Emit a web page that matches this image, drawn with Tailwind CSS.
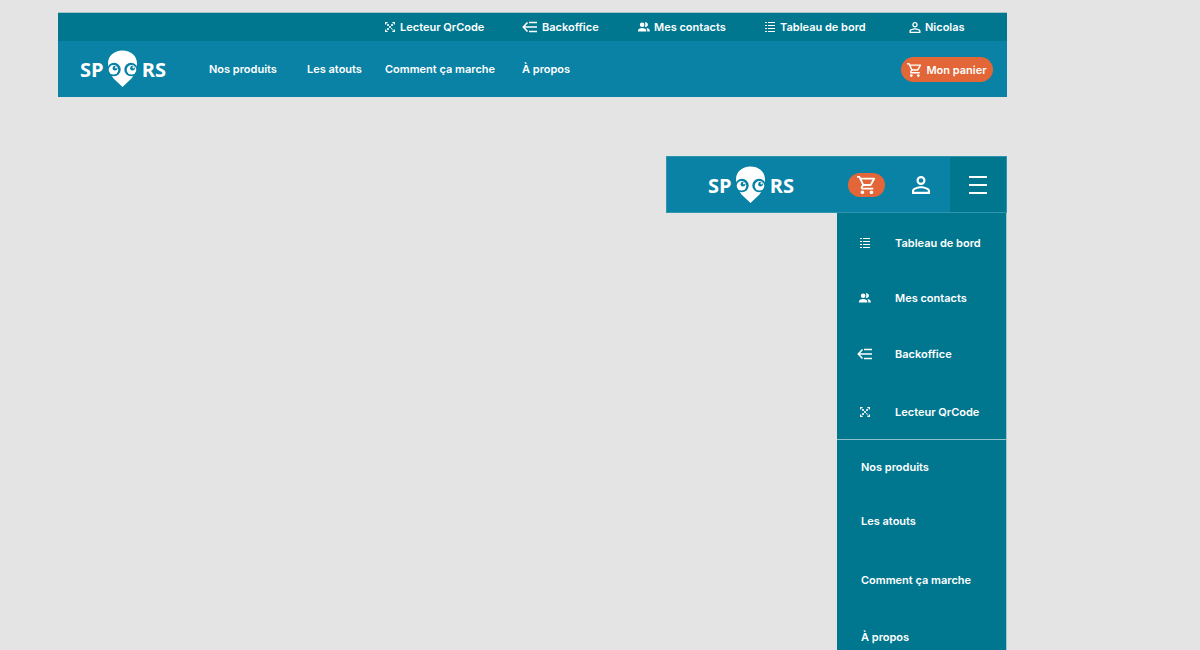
<!DOCTYPE html>
<html lang="fr">
<head>
<meta charset="utf-8">
<meta name="viewport" content="width=device-width, initial-scale=1">
<title>Spoors</title>
<script src="https://cdn.jsdelivr.net/npm/@tailwindcss/browser@4"></script>
</head>
<body class="h-screen overflow-hidden bg-[#e4e4e4] pt-3 pr-[193px] pl-[58px] font-['Inter',sans-serif] text-[11px] leading-4 font-semibold text-white">
<svg class="hidden" aria-hidden="true">
  <symbol id="logo" viewBox="0 0 86 38">
    <g fill="#fff" font-family="Open Sans, sans-serif" font-weight="700" font-size="20">
      <text x="0" y="27">SP</text>
      <text x="86" y="27" text-anchor="end">RS</text>
    </g>
    <path fill="#fff" d="M42.500.5C34 .5 28 6 28 13.500c0 2 .5 4 1.500 6 1.500 4 2 6.500 4 9l9 8.500 9-8.500c2-2.500 2.500-5 4-9 1-2 1.500-4 1.500-6C57 6 51 .5 42.500.5z"/>
    <circle cx="34" cy="19.500" r="6.700" fill="#0982a5"/>
    <circle cx="51" cy="19.500" r="6.700" fill="#0982a5"/>
    <circle cx="33.500" cy="19.800" r="4.800" fill="#fff"/>
    <circle cx="51.500" cy="19.800" r="4.800" fill="#fff"/>
    <circle cx="35" cy="18.200" r="2.400" fill="#0982a5"/>
    <circle cx="52.500" cy="18.200" r="2.400" fill="#0982a5"/>
    <circle cx="36" cy="17.300" r="1.100" fill="#fff"/>
    <circle cx="53.500" cy="17.300" r="1.100" fill="#fff"/>
  </symbol>
  <symbol id="qr" viewBox="0 0 12 12">
    <path d="M1.600 3.600V1.600h2M8.400 1.600h2v2M10.400 8.400v2h-2M3.600 10.400h-2v-2" fill="none" stroke="#fff" stroke-width="1.200"/>
    <path d="M3 3h2v2H3zM7 3h2v2H7zM3 7h2v2H3zM5 5h2v2H5zM7 7h1.200v1.200H7zM8.200 8.200h1v1h-1z" fill="#fff" opacity=".8"/>
  </symbol>
  <symbol id="back" viewBox="0 0 16 12">
    <path d="M7 1.500h8M1 6h14M7 10.500h8M5.500 1.500 1.300 6l4.200 4.500" fill="none" stroke="#fff" stroke-width="1.600"/>
  </symbol>
  <symbol id="people" viewBox="0 0 13 12">
    <circle cx="4.500" cy="3.500" r="2.500" fill="#fff"/>
    <path fill="#fff" d="M0 11V9.500C0 7.700 3 7 4.500 7S9 7.700 9 9.500V11zM7.300 1.200a2.500 2.500 0 1 1 0 4.600c.9-1.400.9-3.200 0-4.600zM9 7.100c2 .3 3.700 1.100 3.700 2.500V11H10V9.500c0-1-.4-1.800-1-2.400z"/>
  </symbol>
  <symbol id="list" viewBox="0 0 12 12">
    <path d="M1 1.500h2M4 1.500h7M1 4.500h2M4 4.500h7M1 7.500h2M4 7.500h7M1 10.500h2M4 10.500h7" fill="none" stroke="#fff" stroke-width="1.200"/>
  </symbol>
  <symbol id="person" viewBox="4 4 16 16">
    <path fill="#fff" d="M12 5.900a2.100 2.100 0 1 1 0 4.200 2.100 2.100 0 0 1 0-4.200m0 9c2.970 0 6.100 1.460 6.100 2.100v1.100H5.900V17c0-.64 3.130-2.100 6.100-2.100M12 4C9.790 4 8 5.790 8 8s1.790 4 4 4 4-1.790 4-4-1.790-4-4-4m0 9c-2.670 0-8 1.340-8 4v3h16v-3c0-2.660-5.330-4-8-4"/>
  </symbol>
  <symbol id="cart" viewBox="1 2 21 20">
    <path fill="#fff" d="M15.550 13c.75 0 1.410-.41 1.750-1.030l3.580-6.490A.996.996 0 0 0 20.010 4H5.210l-.94-2H1v2h2l3.600 7.590-1.350 2.440C4.520 15.370 5.480 17 7 17h12v-2H7l1.100-2zM6.160 6h12.150l-2.760 5H8.530zM7 18c-1.100 0-1.990.9-1.990 2S5.900 22 7 22s2-.9 2-2-.9-2-2-2m10 0c-1.100 0-1.990.9-1.990 2s.89 2 1.990 2 2-.9 2-2-.9-2-2-2"/>
  </symbol>
</svg>

<header class="border-t border-[#a9c3ca]">
  <nav aria-label="Compte" class="flex h-7 justify-end bg-[#00778f]">
    <ul class="grid grid-cols-[138px_116px_126px_145px_98px] items-center">
      <li><a href="#" class="flex items-center gap-1"><svg class="h-3 w-3"><use href="#qr"/></svg>Lecteur QrCode</a></li>
      <li><a href="#" class="flex items-center gap-1"><svg class="h-3 w-4"><use href="#back"/></svg>Backoffice</a></li>
      <li><a href="#" class="flex items-center gap-1"><svg class="h-3 w-3"><use href="#people"/></svg>Mes contacts</a></li>
      <li><a href="#" class="flex items-center gap-1"><svg class="h-3 w-3"><use href="#list"/></svg>Tableau de bord</a></li>
      <li><a href="#" class="flex items-center gap-1"><svg class="h-[11px] w-3"><use href="#person"/></svg>Nicolas</a></li>
    </ul>
  </nav>
  <div class="flex h-14 items-center bg-[#0982a5] pr-3.5 pl-[22px]">
    <a href="#" aria-label="Spoors"><svg class="h-[38px] w-[86px]"><use href="#logo"/></svg></a>
    <nav aria-label="Principale" class="ml-[43px]">
      <ul class="grid grid-cols-[98px_78px_137px_auto]">
        <li><a href="#">Nos produits</a></li>
        <li><a href="#">Les atouts</a></li>
        <li><a href="#">Comment ça marche</a></li>
        <li><a href="#">À propos</a></li>
      </ul>
    </nav>
    <button type="button" class="mt-px ml-auto flex h-[25px] w-[92px] items-center justify-center gap-1 rounded-full bg-[#e26637]"><svg class="h-3.5 w-[15px]"><use href="#cart"/></svg>Mon panier</button>
  </div>
</header>

<section class="mt-[59px] ml-auto w-[341px]">
  <div class="flex h-[57px] items-center border border-[#2f95ad] bg-[#0982a5]">
    <a href="#" aria-label="Spoors" class="ml-[41px]"><svg class="h-[38px] w-[86px]"><use href="#logo"/></svg></a>
    <button type="button" aria-label="Mon panier" class="mt-px ml-auto flex h-6 w-[37px] items-center justify-center rounded-full bg-[#e26637]"><svg class="h-[18px] w-[19px]"><use href="#cart"/></svg></button>
    <button type="button" aria-label="Mon compte" class="mr-5 ml-[27px]"><svg class="h-[18px] w-[18px]"><use href="#person"/></svg></button>
    <button type="button" aria-label="Menu" class="flex h-full w-14 flex-col items-center justify-center gap-1.5 bg-[#00778f]">
      <span class="h-0.5 w-[18px] bg-white"></span>
      <span class="h-0.5 w-[18px] bg-white"></span>
      <span class="h-0.5 w-[18px] bg-white"></span>
    </button>
  </div>
  <nav aria-label="Menu mobile" class="ml-auto w-[170px] border-r border-[#a9c3ca] bg-[#00778f]">
    <ul class="grid grid-rows-[60px_50px_61px_55px] items-center border-b border-[#8fc0cc]">
      <li><a href="#" class="flex items-center gap-0.5"><span class="flex w-14 justify-center"><svg class="h-3 w-3"><use href="#list"/></svg></span>Tableau de bord</a></li>
      <li><a href="#" class="flex items-center gap-0.5"><span class="flex w-14 justify-center"><svg class="h-3 w-3"><use href="#people"/></svg></span>Mes contacts</a></li>
      <li><a href="#" class="flex items-center gap-0.5"><span class="flex w-14 justify-center"><svg class="h-3 w-4"><use href="#back"/></svg></span>Backoffice</a></li>
      <li><a href="#" class="flex items-center gap-0.5"><span class="flex w-14 justify-center"><svg class="h-3 w-3"><use href="#qr"/></svg></span>Lecteur QrCode</a></li>
    </ul>
    <ul class="grid grid-rows-[54px_54px_64px_50px] items-center pl-6">
      <li><a href="#">Nos produits</a></li>
      <li><a href="#">Les atouts</a></li>
      <li><a href="#">Comment ça marche</a></li>
      <li><a href="#">À propos</a></li>
    </ul>
  </nav>
</section>
</body>
</html>
